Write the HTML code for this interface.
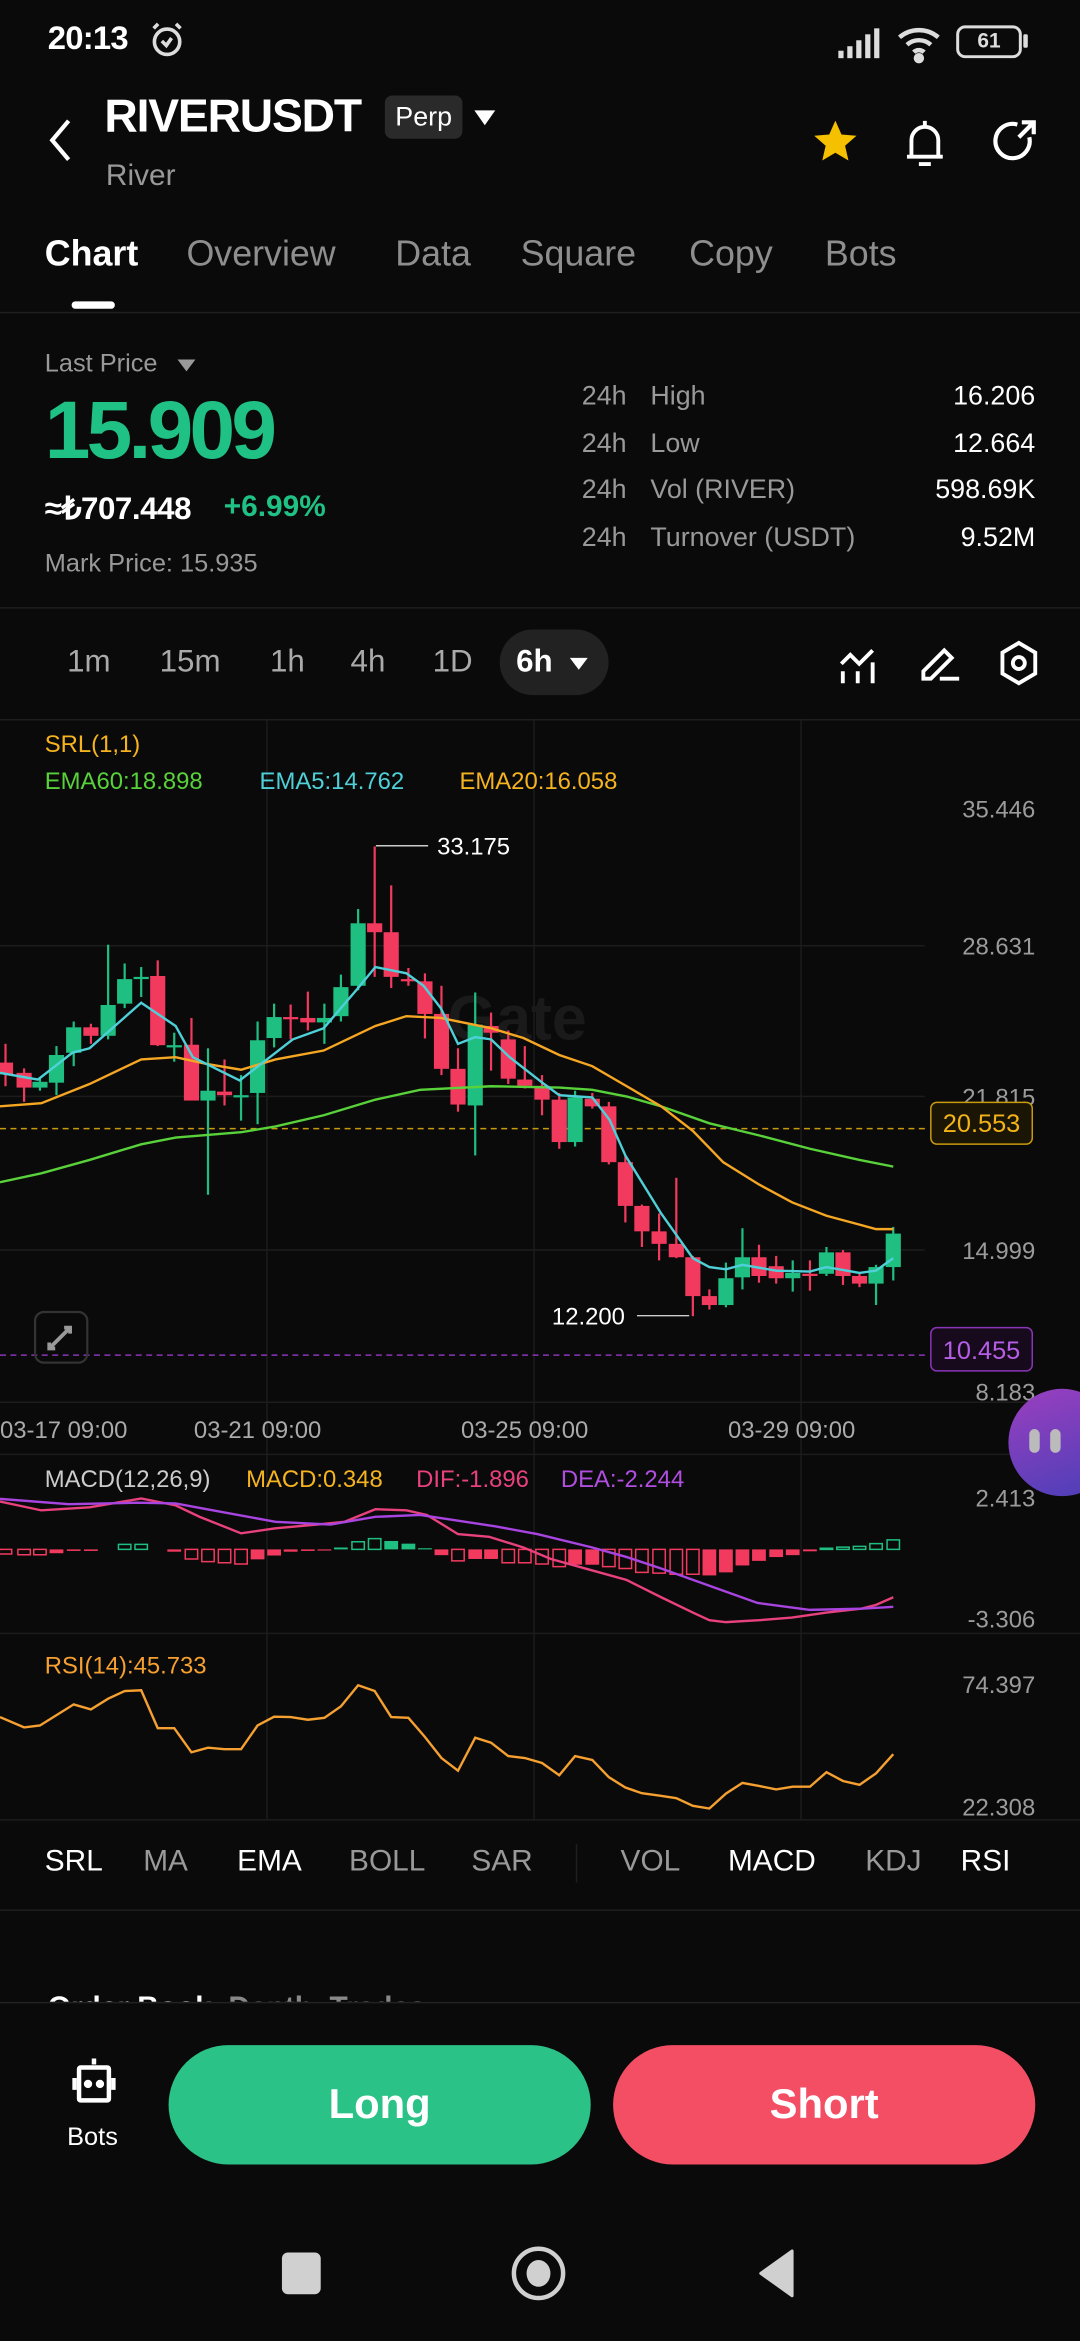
<!DOCTYPE html>
<html><head><meta charset="utf-8">
<style>
*{margin:0;padding:0;box-sizing:border-box}
html,body{width:1080px;height:2340px;background:#0a0a0a;overflow:hidden}
body{font-family:"Liberation Sans",sans-serif;color:#fff}
#w{position:absolute;left:0;top:0;width:724px;height:1569px;transform:scale(1.49171);transform-origin:0 0;background:#0a0a0a}
.a{position:absolute;white-space:nowrap}
.g{color:#8e8e8e}
.sep{position:absolute;left:0;width:724px;height:1px;background:#1f1f1f}
</style></head><body><div id="w">

<!-- status bar -->
<div class="a" style="left:32px;top:13px;font-size:22px;font-weight:bold;letter-spacing:-0.5px">20:13</div>
<svg class="a" style="left:98px;top:13px" width="28" height="28" viewBox="0 0 28 28" fill="none" stroke="#ddd" stroke-width="2.4"><circle cx="14" cy="15" r="8.5"/><path d="M10.5 14.5l3 3 3.5-5"/><path d="M5 6l3-3M23 6l-3-3"/></svg>
<svg class="a" style="left:560px;top:18px" width="36" height="22" viewBox="0 0 36 22" fill="#ddd"><rect x="2" y="16" width="3.5" height="5"/><rect x="8" y="13" width="3.5" height="8"/><rect x="14" y="9" width="3.5" height="12"/><rect x="20" y="5" width="3.5" height="16"/><rect x="26" y="1" width="3.5" height="20"/></svg>
<svg class="a" style="left:600px;top:15px" width="34" height="28" viewBox="0 0 34 28" fill="none" stroke="#ddd" stroke-width="3"><path d="M3 10a20 20 0 0 1 26 0M8 15a12 12 0 0 1 16 0M12.5 20a5 5 0 0 1 7 0"/><circle cx="16" cy="24" r="2" fill="#ddd"/></svg>
<div class="a" style="left:641px;top:17px;width:44px;height:22px;border:2.5px solid #ddd;border-radius:6px;font-size:14px;font-weight:bold;color:#ddd;text-align:center;line-height:17px">61</div>
<div class="a" style="left:686px;top:23px;width:3px;height:9px;background:#ddd;border-radius:1px"></div>

<!-- header -->
<svg class="a" style="left:30px;top:78px" width="22" height="32" viewBox="0 0 22 32" fill="none" stroke="#fff" stroke-width="2.8"><path d="M16 3L5 16l11 13"/></svg>
<div class="a" style="left:70px;top:60px;font-size:31px;font-weight:bold;letter-spacing:-0.8px">RIVERUSDT</div>
<div class="a" style="left:258px;top:64px;width:52px;height:29px;background:#2a2a2a;border-radius:5px;font-size:18px;text-align:center;line-height:29px">Perp</div>
<svg class="a" style="left:317px;top:72px" width="16" height="14"><path d="M1 2h14L8 12z" fill="#fff"/></svg>
<div class="a g" style="left:71px;top:107px;font-size:20px;color:#999">River</div>
<svg class="a" style="left:542px;top:78px" width="36" height="34" viewBox="0 0 24 24"><path d="M12 2l2.9 6.6 7.1.6-5.4 4.7 1.6 7-6.2-3.7-6.2 3.7 1.6-7L2 9.2l7.1-.6z" fill="#f5c000"/></svg>
<svg class="a" style="left:604px;top:78px" width="32" height="36" viewBox="0 0 32 36" fill="none" stroke="#fff" stroke-width="2.6"><path d="M16 3v3M7 27V16a9 9 0 0 1 18 0v11zM4 27h24M12 32h8"/></svg>
<svg class="a" style="left:663px;top:78px" width="34" height="34" viewBox="0 0 34 34" fill="none" stroke="#fff" stroke-width="2.8"><path d="M27 14A11.5 11.5 0 1 1 19 5.5"/><path d="M20 14L30 4M22 4h8v8"/></svg>

<!-- tabs -->
<div class="a" style="left:30px;top:157px;font-size:24px;font-weight:bold">Chart</div>
<div class="a g" style="left:125px;top:157px;font-size:24px">Overview</div>
<div class="a g" style="left:265px;top:157px;font-size:24px">Data</div>
<div class="a g" style="left:349px;top:157px;font-size:24px">Square</div>
<div class="a g" style="left:462px;top:157px;font-size:24px">Copy</div>
<div class="a g" style="left:553px;top:157px;font-size:24px">Bots</div>
<div class="a" style="left:48px;top:202px;width:29px;height:5px;border-radius:3px;background:#fff"></div>
<div class="sep" style="top:209px"></div>

<!-- price -->
<div class="a" style="left:30px;top:234px;font-size:17px;color:#999">Last Price</div>
<svg class="a" style="left:118px;top:239px" width="14" height="12"><path d="M1 2h12L7 10z" fill="#999"/></svg>
<div class="a" style="left:30px;top:256px;font-size:55px;font-weight:bold;color:#20c185;letter-spacing:-2.5px">15.909</div>
<div class="a" style="left:30px;top:329px;font-size:21px;font-weight:bold;letter-spacing:-0.3px">≈₺707.448</div>
<div class="a" style="left:150px;top:329px;font-size:20px;font-weight:bold;color:#20c185">+6.99%</div>
<div class="a" style="left:30px;top:368px;font-size:17px;color:#999">Mark Price: 15.935</div>

<div class="a" style="left:390px;top:250px;font-size:18px;color:#999;line-height:31.7px">24h<br>24h<br>24h<br>24h</div>
<div class="a" style="left:436px;top:250px;font-size:18px;color:#999;line-height:31.7px">High<br>Low<br>Vol (RIVER)<br>Turnover (USDT)</div>
<div class="a" style="right:30px;top:250px;font-size:18px;text-align:right;line-height:31.7px">16.206<br>12.664<br>598.69K<br>9.52M</div>
<div class="sep" style="top:407px"></div>

<!-- timeframes -->
<div class="a" style="left:335px;top:422px;width:73px;height:44px;background:#222;border-radius:22px"></div>
<div class="a g" style="left:45px;top:432px;font-size:21px;color:#aaa">1m</div>
<div class="a g" style="left:107px;top:432px;font-size:21px;color:#aaa">15m</div>
<div class="a g" style="left:181px;top:432px;font-size:21px;color:#aaa">1h</div>
<div class="a g" style="left:235px;top:432px;font-size:21px;color:#aaa">4h</div>
<div class="a g" style="left:290px;top:432px;font-size:21px;color:#aaa">1D</div>
<div class="a" style="left:346px;top:432px;font-size:21px;font-weight:bold">6h</div>
<svg class="a" style="left:381px;top:439px" width="14" height="12"><path d="M1 2h12L7 10z" fill="#fff"/></svg>
<svg class="a" style="left:561px;top:430px" width="30" height="30" viewBox="0 0 30 30" fill="none" stroke="#fff" stroke-width="2.6"><path d="M3 15l6-6 6 6 9-9"/><path d="M4 20v8M14 20v8M24 14v14"/></svg>
<svg class="a" style="left:615px;top:430px" width="30" height="30" viewBox="0 0 30 30" fill="none" stroke="#fff" stroke-width="2.6"><path d="M4 25v-5L18 6l5 5L9 25zM15 25h13"/></svg>
<svg class="a" style="left:668px;top:428px" width="30" height="34" viewBox="0 0 30 34" fill="none" stroke="#fff" stroke-width="2.6"><path d="M15 3l11 6.5v14L15 30 4 23.5v-14z"/><circle cx="15" cy="16.5" r="4"/></svg>
<div class="sep" style="top:482px"></div>

<!-- main chart -->
<svg class="a" style="left:0;top:0" width="724" height="1569">
 <g stroke="#1c1c1c" stroke-width="1">
  <path d="M179 482V1220M358 482V1220M537 482V1220"/>
  <path d="M0 634H620M0 735H620M0 838H620M0 940H724M0 975H724M0 1095H724M0 1220H724"/>
 </g>
 <g fill="#ccc" font-size="16" font-family="Liberation Sans" text-anchor="end" fill-opacity=".75">
  <text x="694" y="548">35.446</text><text x="694" y="640">28.631</text><text x="694" y="741">21.815</text>
  <text x="694" y="844">14.999</text><text x="694" y="939">8.183</text>
  <text x="694" y="1010">2.413</text><text x="694" y="1091">-3.306</text>
  <text x="694" y="1135">74.397</text><text x="694" y="1217">22.308</text>
 </g>
 <text x="300" y="697" font-size="42" font-weight="bold" fill="#1a1a1a" font-family="Liberation Sans">Gate</text>
 <path d="M0 756.6H620" stroke="#c99a10" stroke-width="1" stroke-dasharray="4 3"/>
 <path d="M0 908.4H620" stroke="#8a35b8" stroke-width="1" stroke-dasharray="4 3"/>
 <g transform="translate(0,469.3) scale(0.4617,0.2993)">
  <g id="c"></g>
  <g fill="none" stroke-width="1.6" vector-effect="non-scaling-stroke">
   <polyline vector-effect="non-scaling-stroke" stroke="#58d13a" points="0,1080 60,1060 130,1030 205,995 255,980 350,968 400,955 470,930 545,895 610,873 713,865 812,868 860,873 910,888 960,910 1030,948 1102,975 1176,1005 1248,1030 1297,1045"/>
   <polyline vector-effect="non-scaling-stroke" stroke="#f5a623" points="0,910 60,903 130,860 205,805 255,800 300,815 350,828 400,805 470,785 545,730 590,708 640,712 713,735 760,757 812,795 860,820 910,865 960,910 1006,965 1050,1035 1102,1085 1150,1125 1200,1155 1248,1175 1272,1185 1297,1185"/>
   <polyline vector-effect="non-scaling-stroke" stroke="#4fd0d8" points="0,835 55,850 105,790 130,780 205,678 255,730 280,800 348,852 400,790 425,760 470,735 520,645 545,598 590,612 615,640 640,690 665,770 690,755 713,760 740,800 790,860 812,885 860,890 885,940 908,1020 960,1150 1006,1250 1030,1270 1054,1275 1078,1265 1127,1278 1176,1280 1200,1270 1248,1283 1272,1278 1297,1250"/>
  </g>
 </g>
 <path d="M252 567H287M427 882H462" stroke="#ccc" stroke-width="1"/>
 <text x="293" y="573" font-size="16" fill="#fff" font-family="Liberation Sans">33.175</text>
 <text x="370" y="888" font-size="16" fill="#fff" font-family="Liberation Sans">12.200</text>
 <rect x="624" y="739" width="68" height="28" rx="4" fill="#1b1505" stroke="#c99a10"/>
 <text x="658" y="759" font-size="17" fill="#f2b318" text-anchor="middle" font-family="Liberation Sans">20.553</text>
 <rect x="624" y="890" width="68" height="29" rx="4" fill="#160a1c" stroke="#8a35b8"/>
 <text x="658" y="911" font-size="17" fill="#b65ee6" text-anchor="middle" font-family="Liberation Sans">10.455</text>
 <rect x="23.5" y="879.5" width="35" height="34" rx="6" fill="none" stroke="#333" stroke-width="1.5"/>
 <path d="M33 904l14-14M43 890h4v4M33 900v4h4" stroke="#999" stroke-width="2.5" fill="none"/>
 <g fill="#aaa" font-size="16" font-family="Liberation Sans">
  <text x="0" y="964">03-17 09:00</text><text x="130" y="964">03-21 09:00</text>
  <text x="309" y="964">03-25 09:00</text><text x="488" y="964">03-29 09:00</text>
 </g>
 <g font-size="16" font-family="Liberation Sans"><text x="30" y="997" fill="#ccc">MACD(12,26,9)</text><text x="165" y="997" fill="#f5b31f">MACD:0.348</text><text x="279" y="997" fill="#e8417d">DIF:-1.896</text><text x="376" y="997" fill="#b04ee0">DEA:-2.244</text></g>
 <g transform="translate(0,938.6) scale(0.4617,0.2566)">
  <g id="h"></g>
  <polyline vector-effect="non-scaling-stroke" fill="none" stroke="#e8417d" stroke-width="1.6" points="0,265 60,288 130,280 205,257 255,275 290,305 350,348 400,335 460,325 500,318 545,285 590,288 620,300 665,350 710,357 760,385 800,415 860,445 910,470 960,515 1006,555 1030,575 1054,580 1102,575 1150,568 1200,555 1250,545 1272,535 1297,515"/>
  <polyline vector-effect="non-scaling-stroke" fill="none" stroke="#a844e0" stroke-width="1.6" points="0,258 100,272 200,268 255,270 300,285 400,318 480,325 545,305 610,300 665,315 720,330 780,350 860,385 910,410 960,440 1030,485 1100,530 1176,548 1250,545 1297,540"/>
  <polyline vector-effect="non-scaling-stroke" fill="none" stroke="#f5a030" stroke-width="1.6" points="0,828 35,855 58,850 107,795 132,808 157,780 181,760 205,758 229,857 253,857 278,920 302,908 326,912 350,912 374,850 398,827 422,828 447,835 471,830 495,800 520,745 544,760 568,828 593,830 617,880 641,935 665,968 690,882 713,895 738,930 762,935 787,948 812,980 835,930 860,940 884,985 908,1012 932,1027 957,1033 982,1040 1006,1060 1030,1067 1054,1028 1078,1000 1102,1008 1127,1017 1151,1010 1176,1010 1200,972 1224,995 1248,1005 1272,975 1297,925"/>
 </g>
 <text x="30" y="1122" font-size="16" fill="#f5a030" font-family="Liberation Sans">RSI(14):45.733</text>
</svg>
<div class="a" style="left:30px;top:491px;font-size:16px;color:#f5b31f">SRL(1,1)</div>
<div class="a" style="left:30px;top:516px;font-size:16px;color:#58d13a">EMA60:18.898</div>
<div class="a" style="left:174px;top:516px;font-size:16px;color:#4fd0d8">EMA5:14.762</div>
<div class="a" style="left:308px;top:516px;font-size:16px;color:#f5b31f">EMA20:16.058</div>

<div class="a" style="left:676px;top:931px;width:72px;height:72px;border-radius:50%;background:linear-gradient(160deg,#9b3fbf,#4a3fb8)"></div>
<div class="a" style="left:690px;top:958px;width:7px;height:16px;border-radius:4px;background:#bbb"></div>
<div class="a" style="left:704px;top:958px;width:7px;height:16px;border-radius:4px;background:#bbb"></div>

<div class="a" style="top:1237px;left:0;font-size:20px;width:724px">
 <span class="a" style="left:30px">SRL</span><span class="a" style="left:96px;color:#999">MA</span><span class="a" style="left:159px">EMA</span><span class="a" style="left:234px;color:#999">BOLL</span><span class="a" style="left:316px;color:#999">SAR</span><span class="a" style="left:416px;color:#999">VOL</span><span class="a" style="left:488px">MACD</span><span class="a" style="left:580px;color:#999">KDJ</span><span class="a" style="left:644px">RSI</span>
</div>
<div class="a" style="left:386px;top:1236px;width:1px;height:26px;background:#1f1f1f"></div>
<div class="sep" style="top:1280px"></div>
<div class="a" style="left:32px;top:1335px;font-size:20px;font-weight:bold;height:7px;overflow:hidden">Order Book <span style="color:#888">&nbsp;Depth&nbsp; Trades</span></div>

<div class="a" style="left:0;top:1342px;width:724px;height:227px;background:#0a0a0a;border-top:1px solid #222"></div>
<svg class="a" style="left:47px;top:1378px" width="32" height="36" viewBox="0 0 32 36" fill="none" stroke="#fff" stroke-width="3"><path d="M16 2v4"/><rect x="6" y="8" width="20" height="22" rx="1"/><path d="M3 15v8M29 15v8"/><circle cx="12" cy="19" r="1.3" fill="#fff"/><circle cx="20" cy="19" r="1.3" fill="#fff"/></svg>
<div class="a" style="left:45px;top:1423px;font-size:17px">Bots</div>
<div class="a" style="left:113px;top:1371px;width:283px;height:80px;border-radius:40px;background:#2bc287;font-size:28px;font-weight:bold;text-align:center;line-height:80px">Long</div>
<div class="a" style="left:411px;top:1371px;width:283px;height:80px;border-radius:40px;background:#f44e65;font-size:28px;font-weight:bold;text-align:center;line-height:80px">Short</div>

<div class="a" style="left:189px;top:1510px;width:26px;height:28px;border-radius:4px;background:#d0d0d0"></div>
<div class="a" style="left:343px;top:1506px;width:36px;height:36px;border-radius:50%;border:3.5px solid #d0d0d0"></div>
<div class="a" style="left:353px;top:1515px;width:16px;height:18px;border-radius:50%;background:#d0d0d0"></div>
<svg class="a" style="left:505px;top:1507px" width="28" height="34"><path d="M26 2v30L5 17z" fill="#d0d0d0" stroke="#d0d0d0" stroke-width="2" stroke-linejoin="round"/></svg>

<script>
var C=[[8,0,812,838,770,865],[35,0,835,868,825,900],[58,1,855,868,845,875],[82,1,795,857,775,885],[107,1,733,790,720,820],[132,0,733,752,725,770],[157,1,683,752,548,760],[181,1,625,680,590,690],[205,1,620,623,598,665],[229,0,618,773,583,775],[253,1,773,776,745,810],[278,0,772,897,712,897],[302,1,875,897,780,1108],[326,0,877,885,805,908],[350,1,885,888,840,942],[374,1,762,880,720,950],[398,1,710,757,680,778],[422,0,710,714,682,760],[447,0,712,722,653,740],[471,1,712,722,680,770],[495,1,643,708,615,720],[520,1,500,640,468,650],[544,0,500,520,328,620],[568,0,520,620,415,645],[593,0,625,628,600,640],[617,0,630,703,612,758],[641,0,703,826,640,840],[665,0,826,906,780,922],[690,1,727,908,655,1020],[713,0,730,745,700,830],[738,0,760,848,740,860],[762,0,850,864,775,870],[787,0,864,895,840,930],[812,0,895,990,880,1005],[835,1,890,990,875,1000],[860,0,893,910,880,915],[884,0,910,1035,900,1040],[908,0,1035,1133,1020,1170],[932,0,1133,1190,1130,1225],[957,0,1190,1218,1150,1255],[982,0,1218,1248,1070,1250],[1006,0,1248,1335,1245,1380],[1030,0,1335,1355,1320,1365],[1054,1,1295,1355,1260,1360],[1078,1,1248,1293,1183,1320],[1102,0,1248,1290,1220,1305],[1127,0,1268,1295,1245,1307],[1151,1,1283,1295,1255,1325],[1176,0,1285,1290,1255,1323],[1200,1,1237,1285,1225,1290],[1224,0,1237,1290,1232,1310],[1248,0,1290,1307,1285,1315],[1272,1,1270,1307,1265,1355],[1297,1,1195,1270,1180,1300]];
var s='';C.forEach(function(c){var col=c[1]?'#1fbf82':'#f23a5f';s+='<rect x="'+(c[0]-1.6)+'" y="'+c[4]+'" width="3.2" height="'+(c[5]-c[4])+'" fill="'+col+'"/>';s+='<rect x="'+(c[0]-11)+'" y="'+c[2]+'" width="22" height="'+Math.max(c[3]-c[2],5)+'" fill="'+col+'"/>';});
document.getElementById('c').innerHTML=s;
var H=[[8,0,402,1],[35,0,404,1],[58,0,404,1],[82,0,400,0],[107,0,394,0],[132,0,394,0],[181,1,377,1],[205,1,377,1],[253,0,396,0],[278,0,415,1],[302,0,422,1],[326,0,425,1],[350,0,428,1],[374,0,416,0],[398,0,406,0],[422,0,396,0],[447,0,394,0],[471,0,393,0],[495,1,385,0],[520,1,370,1],[544,1,362,1],[568,1,368,0],[593,1,375,0],[617,1,387,0],[641,0,405,0],[665,0,420,1],[690,0,415,0],[713,0,415,0],[738,0,425,1],[762,0,425,1],[787,0,428,1],[812,0,435,1],[835,0,430,0],[860,0,430,0],[884,0,435,1],[908,0,440,1],[932,0,450,1],[957,0,452,1],[982,0,455,1],[1006,0,455,1],[1030,0,458,0],[1054,0,450,0],[1078,0,432,0],[1102,0,420,0],[1127,0,410,0],[1151,0,405,0],[1176,0,395,0],[1200,1,387,1],[1224,1,384,1],[1248,1,382,1],[1272,1,375,1],[1297,1,365,1]];
var t='';H.forEach(function(h){var col=h[1]?'#1fbf82':'#f23a5f';var y1=Math.min(h[2],390),y2=Math.max(h[2],390);if(h[3]){t+='<rect x="'+(h[0]-9)+'" y="'+y1+'" width="18" height="'+(y2-y1)+'" fill="none" stroke="'+col+'" stroke-width="1" vector-effect="non-scaling-stroke"/>';}else{t+='<rect x="'+(h[0]-10)+'" y="'+y1+'" width="20" height="'+(y2-y1)+'" fill="'+col+'"/>';}});
document.getElementById('h').innerHTML=t;
</script>
</div></body></html>
